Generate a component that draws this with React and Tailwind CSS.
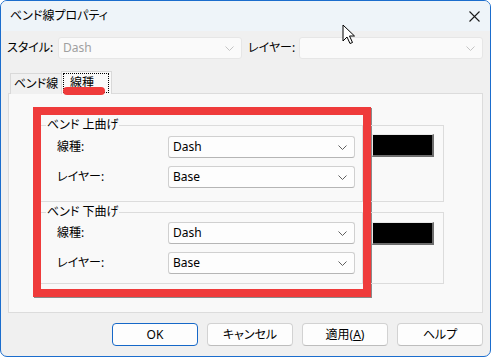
import React from "react";

function Chevron({ light }) {
  return (
    <svg width="9" height="5" viewBox="0 0 9 5" className="shrink-0">
      <polyline points="0.5,0.5 4.5,4.5 8.5,0.5" fill="none" stroke={light ? "#c4c4c4" : "#5f5f5f"} strokeWidth="1" />
    </svg>
  );
}

function Combo({ value, w, disabled }) {
  return (
    <div
      className={`shrink-0 flex items-center h-[22px] rounded-[3px] border pl-[4px] pr-[7px] ${w} ${
        disabled ? "border-[#e6e6e6] bg-[#fafafa] text-[#a0a0a0]" : "border-[#d0d0d0] border-b-[#b5b5b5] bg-[#fdfdfd] text-black"
      }`}
    >
      <span className="flex-1 text-[12px] leading-none">{value}</span>
      <Chevron light={disabled} />
    </div>
  );
}

function Row({ label, value }) {
  return (
    <div className="flex items-center h-[22px]">
      <span className="shrink-0 whitespace-nowrap w-[127px] pl-[16px] text-[12px] leading-none text-black">{label}</span>
      <Combo value={value} w="w-[187px]" />
    </div>
  );
}

function Group({ title, h, pt, mt }) {
  return (
    <div className={`relative border-t border-b border-r border-[#dcdcdc] ${h} ${pt} ${mt}`}>
      <span className="absolute -top-[9px] left-[5px] whitespace-nowrap bg-[#f9f9f9] px-[1px] text-[12px] leading-[16px] text-black">
        {title}
      </span>
      <div className="flex flex-col gap-[8px]">
        <Row label="線種:" value="Dash" />
        <Row label="レイヤー:" value="Base" />
      </div>
    </div>
  );
}

function Swatch({ mt }) {
  return (
    <div className={`${mt} ml-[1px] w-[62px] h-[23px] bg-black border-t border-l border-[#e8e8e8] border-r-2 border-b-2 border-r-[#6e6e6e] border-b-[#6e6e6e]`} />
  );
}

function Button({ children, primary }) {
  return (
    <div
      className={`shrink-0 w-[86px] h-[23px] flex items-center justify-center whitespace-nowrap rounded-[4px] border text-[12px] leading-none text-black bg-[#fdfdfd] ${
        primary ? "border-[#1668c8]" : "border-[#d2d2d2] border-b-[#bdbdbd]"
      }`}
    >
      {children}
    </div>
  );
}

export default function App() {
  return (
    <div className="relative w-[491px] h-[357px] border border-[#1b6dcd] rounded-[7px] overflow-hidden bg-[#f0f0f0] flex flex-col font-['Noto_Sans','Noto_Sans_CJK_JP',sans-serif] [font-feature-settings:'palt']">
      {/* title bar */}
      <div className="h-[30px] shrink-0 bg-[#eef4f9] flex items-center pl-[9px] pr-[10px]">
        <span className="text-[12px] leading-none text-black whitespace-nowrap">ベンド線プロパティ</span>
        <svg className="ml-auto" width="11" height="11" viewBox="0 0 11 11">
          <path d="M0.5 0.5 L10.5 10.5 M10.5 0.5 L0.5 10.5" stroke="#1a1a1a" strokeWidth="1.1" />
        </svg>
      </div>

      {/* style / layer row */}
      <div className="mt-[6px] flex items-center pl-[6px]">
        <span className="shrink-0 whitespace-nowrap w-[51px] text-[12px] leading-none text-black">スタイル:</span>
        <Combo value="Dash" w="w-[184px]" disabled />
        <span className="shrink-0 whitespace-nowrap ml-[6px] w-[51px] text-[12px] leading-none text-black">レイヤー:</span>
        <Combo value="" w="w-[184px]" disabled />
      </div>

      {/* tabs */}
      <div className="mt-[12px] flex items-start pl-[9px] relative z-10">
        <div className="mt-[2px] w-[51px] h-[21px] border border-r-0 border-b-0 border-[#d9d9d9] bg-[#f0f0f0] flex items-center justify-center whitespace-nowrap text-[12px] leading-none text-black">
          ベンド線
        </div>
        <div className="relative w-[51px] h-[23px] border border-b-0 border-[#d9d9d9] bg-[#f9f9f9] flex items-center">
          <div className="absolute left-[1px] top-[1px] w-[46px] h-[20px] border border-dotted border-black" />
          <span className="ml-[8px] text-[12px] leading-none text-black whitespace-nowrap">線種</span>
          <div className="absolute left-[1px] top-[15px] w-[42px] h-[8px] rounded-full bg-[#ef3b3b]" />
        </div>
      </div>

      {/* panel */}
      <div className="-mt-px ml-[7px] w-[475px] h-[220px] border border-[#dcdcdc] bg-[#f9f9f9] pl-[24px] pt-[13px] flex items-start">
        <div className="shrink-0 w-[338px] h-[190px] border-[8px] border-[#ef3b3b] shadow-[1px_1px_0_#8a8a8a] flex flex-col">
          <Group title="ベンド 上曲げ" h="h-[77px]" pt="pt-[10px]" mt="mt-[10px]" />
          <Group title="ベンド 下曲げ" h="h-[72px]" pt="pt-[9px]" mt="mt-[10px]" />
        </div>
        <div className="flex flex-col pt-[18px]">
          <div className="w-[73px] h-[77px] border-t border-r border-b border-[#dcdcdc]">
            <Swatch mt="mt-[8px]" />
          </div>
          <div className="mt-[10px] w-[73px] h-[72px] border-t border-r border-b border-[#dcdcdc]">
            <Swatch mt="mt-[9px]" />
          </div>
        </div>
      </div>

      {/* buttons */}
      <div className="mt-[10px] flex justify-end gap-[9px] pr-[7px]">
        <Button primary>OK</Button>
        <Button>キャンセル</Button>
        <Button>
          適用(<span className="underline">A</span>)
        </Button>
        <Button>ヘルプ</Button>
      </div>

      {/* mouse cursor */}
      <svg className="absolute left-[341px] top-[23px]" width="14" height="21" viewBox="0 0 14 21">
        <path d="M1 1 L1 17 L5 13 L8 19.5 L10.5 18.5 L7.5 12 L12.5 12 Z" fill="white" stroke="black" strokeWidth="1" strokeLinejoin="round" />
      </svg>
    </div>
  );
}
